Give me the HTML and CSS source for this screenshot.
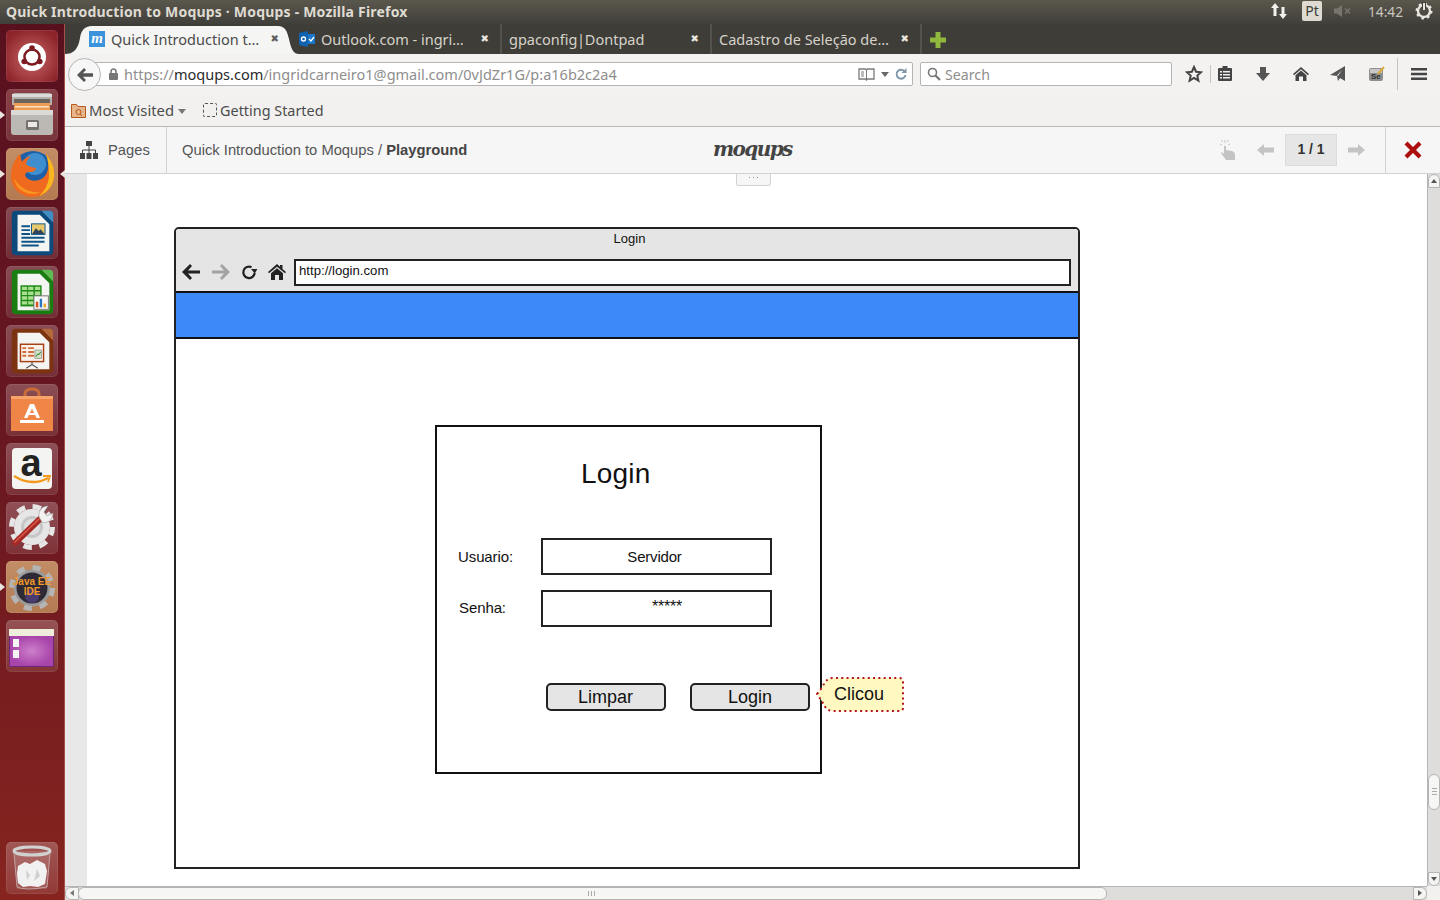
FILE: index.html
```html
<!DOCTYPE html>
<html lang="pt-br">
<head>
  <meta charset="UTF-8">
  <meta name="viewport" content="width=device-width, initial-scale=1.0">
  <title>Quick Introduction to Moqups</title>
  <link rel="stylesheet" href="styles.css">
</head>
<body>

  <!-- barra do sistema -->
  <header class="panel">
    <span class="panel-title">Quick Introduction to Moqups · Moqups - Mozilla Firefox</span>
    <div class="panel-tray">
      <svg class="tray-net" width="18" height="18" viewBox="0 0 18 18"><path fill="#f2f1ec" d="M5 1l4 5H6.500v8h-3V6H1zM13 17l-4-5h2.500V5h3v7H17z"/></svg>
      <span class="tray-lang">Pt</span>
      <svg class="tray-vol" width="20" height="14" viewBox="0 0 20 14"><path fill="#77756e" d="M2 4.500h3L10 1v12L5 9.500H2z"/><path stroke="#77756e" stroke-width="1.600" d="M13 4.500l5 5M18 4.500l-5 5"/></svg>
      <span class="tray-clock">14:42</span>
      <svg class="tray-power" width="18" height="18" viewBox="0 0 18 18"><circle cx="9" cy="9" r="6" fill="none" stroke="#e8e6df" stroke-width="2.400"/><circle cx="9" cy="9" r="7.300" fill="none" stroke="#e8e6df" stroke-width="2.400" stroke-dasharray="2.500 3.230"/><path stroke="#3f3d38" stroke-width="4" d="M9 0v7"/><path stroke="#e8e6df" stroke-width="2" d="M9 1v7"/></svg>
    </div>
  </header>

  <div class="desktop">

    <!-- launcher do unity -->
    <nav class="launcher">
      <div class="tile tile-red">
        <svg viewBox="0 0 52 52"><circle cx="26" cy="27" r="14" fill="#fff"/><circle cx="26" cy="27" r="7.500" fill="none" stroke="#7c1c22" stroke-width="2.600"/><g fill="#7c1c22"><circle cx="26" cy="18" r="2.800"/><circle cx="18.200" cy="31.500" r="2.800"/><circle cx="33.800" cy="31.500" r="2.800"/></g></svg>
      </div>
      <div class="tile tile-dim">
        <i class="pip pip-left"></i>
        <svg viewBox="0 0 52 52"><path fill="#b4b1ac" d="M6 7q0-3 3-3h34q3 0 3 3v9H6z"/><path fill="#dddbd7" d="M6 5h40v3H6z"/><path fill="#6a655f" d="M8 10h36v6H8z"/><path fill="#ee9c54" d="M8 14h36v7H8z"/><path fill="#fbe3c6" d="M9 17h34v1.500H9z"/><path fill="#bcb9b4" d="M5 21h42v22q0 3-3 3H8q-3 0-3-3z"/><path fill="#dcdad6" d="M5 21h42v5H5z"/><rect x="20" y="31" width="13" height="10" rx="1.500" fill="#77736e"/><rect x="22" y="33" width="9" height="5" fill="#ecebe8"/></svg>
      </div>
      <div class="tile tile-active">
        <i class="pip pip-left"></i><i class="pip pip-right"></i>
        <svg viewBox="0 0 52 52"><circle cx="27" cy="23" r="20" fill="#1f5fa5"/><circle cx="29" cy="16" r="11" fill="#3f8fd0"/><path fill="#ef6a1e" d="M14 6C8 12 5 20 5 28c0 13 10 21 22 21 11 0 20-8 21-21 0-8-3-16-8-22 4 8 3 18-2 23-5 5-14 5-18 0-2-3 0-5 4-5s6-2 6-4c-3-1-8-1-10-4 1-4 3-6 5-8-5 1-8 4-9 6z"/><path fill="#f9b61f" d="M40 6c6 7 9 15 8 23-1 9-7 16-15 19 6-5 10-13 10-21 0-8-1-15-3-21z"/><path fill="#f8971f" d="M8 30c1 9 9 16 19 16 3 0 5-1 7-2-11 1-21-4-26-14z"/></svg>
      </div>
      <div class="tile">
        <svg viewBox="-1 -1 54 54"><path fill="#0d4a7c" d="M9 3h27l12 12v30q0 4-4 4H9q-4 0-4-4V7q0-4 4-4z"/><path fill="#3f8fc4" d="M36 3h8q4 0 4 4v8z"/><path fill="#f4f4f2" d="M11 7h23l10 10v28H11z"/><g fill="#0f5587"><path d="M15 18h9v2h-9zM15 22h9v2h-9zM15 26h9v2h-9zM15 30h24v2H15zM15 34h24v2H15zM15 38h18v2H15z"/><rect x="25" y="16" width="15" height="12"/></g><path fill="#e9c76b" d="M26 17h13v10H26z"/><path fill="#30455a" d="M26 27l4-6 3 3 2-2 4 5z"/></svg>
      </div>
      <div class="tile">
        <svg viewBox="-1 -1 54 54"><path fill="#197d12" d="M9 3h27l12 12v30q0 4-4 4H9q-4 0-4-4V7q0-4 4-4z"/><path fill="#5dbb52" d="M36 3h8q4 0 4 4v8z"/><path fill="#f4f4f2" d="M11 7h23l10 10v28H11z"/><path fill="#1f8a17" d="M14 19h22v22H14z"/><g fill="#a9df8e"><path d="M15.500 20.500h5.500v3.500h-5.500zM22 20.500h5.500v3.500H22zM29 20.500h5.500v3.500H29zM15.500 25.500h5.500v3.500h-5.500zM22 25.500h5.500v3.500H22zM29 25.500h5.500v3.500H29zM15.500 30.500h5.500v3.500h-5.500zM22 30.500h5.500v3.500H22zM15.500 35.500h5.500v3.500h-5.500zM22 35.500h5.500v3.500H22z"/></g><rect x="28" y="30" width="15" height="14" fill="#f7f7f5" stroke="#777"/><path fill="#d9531e" d="M30 36h2.500v6H30z"/><path fill="#2a78c2" d="M34 33h2.500v9H34z"/><path fill="#e9a81f" d="M38 38h2.500v4H38z"/></svg>
      </div>
      <div class="tile">
        <svg viewBox="-1 -1 54 54"><path fill="#7c3410" d="M9 3h27l12 12v30q0 4-4 4H9q-4 0-4-4V7q0-4 4-4z"/><path fill="#b5683a" d="M36 3h8q4 0 4 4v8z"/><path fill="#f4f4f2" d="M11 7h23l10 10v28H11z"/><rect x="14" y="19" width="24" height="18" fill="#faf2ea" stroke="#a63f12" stroke-width="1.500"/><path fill="#cf6d38" d="M16 22h4v2h-4zM22 22h6v2h-6zM16 26h4v2h-4zM22 26h6v2h-6zM16 30h4v2h-4zM22 30h6v2h-6z"/><rect x="29" y="25" width="7" height="9" fill="#cfe0c4" stroke="#777" stroke-width=".6"/><path stroke="#2f7d28" fill="none" d="M30 32l2-3 1 1 2-3"/><path stroke="#555" stroke-width="1.200" fill="none" d="M26 37v3M26 40l-6 4M26 40l6 4"/></svg>
      </div>
      <div class="tile">
        <svg viewBox="0 0 52 52"><path fill="none" stroke="#c96c39" stroke-width="3" d="M19 14v-4q0-5 7-5t7 5v4"/><path fill="#ef8648" d="M5 12h42v35H5z"/><path fill="#f7a46b" d="M5 12h42v3H5z"/><path fill="#fff" fill-rule="evenodd" d="M24 20h4l6 14h-3.500l-1.200-3h-6.600l-1.200 3H18zM26 24.500l-2 4.500h4z"/><path fill="#fff" d="M14 36h24v3H14z"/></svg>
      </div>
      <div class="tile">
        <svg viewBox="0 0 52 52"><rect x="6" y="5" width="40" height="41" rx="4" fill="#f4f4f2"/><text class="amazon-a" x="25" y="33" text-anchor="middle">a</text><path d="M8 33q18 11 34 2" fill="none" stroke="#f39a1d" stroke-width="2.400"/><path d="M37 33l7 0-2 6" fill="none" stroke="#f39a1d" stroke-width="1.800"/></svg>
      </div>
      <div class="tile">
        <svg viewBox="0 0 52 52"><circle cx="26" cy="25" r="18" fill="#e6e6e6"/><circle cx="26" cy="25" r="20.500" fill="none" stroke="#e6e6e6" stroke-width="5" stroke-dasharray="8.500 7.600"/><circle cx="26" cy="25" r="11" fill="#c6c6c6"/><circle cx="26" cy="25" r="8" fill="#dedede"/><path d="M9 41L35 16" stroke="#a32a25" stroke-width="6" stroke-linecap="round"/><path d="M9 40L33 17" stroke="#e0574d" stroke-width="1.500" stroke-linecap="round"/><path fill="#f1f1f1" stroke="#999" stroke-width=".6" d="M33 15c-1-6 3-11 9-11l-4 6 3 4 6-3c0 7-6 11-11 9z"/></svg>
      </div>
      <div class="tile tile-active">
        <i class="pip pip-left"></i>
        <svg viewBox="0 0 52 52"><circle cx="26" cy="27" r="17" fill="#2d2a35" stroke="#9a9a9a" stroke-width="3"/><circle cx="26" cy="27" r="20.500" fill="none" stroke="#b5b5b5" stroke-width="5" stroke-dasharray="8 8.100"/><circle cx="26" cy="35" r="7" fill="#4a3b70"/><text class="java-label" x="26" y="24" text-anchor="middle">Java EE</text><text class="java-label" x="26" y="34" text-anchor="middle">IDE</text></svg>
      </div>
      <div class="tile">
        <svg viewBox="0 0 52 52"><defs><radialGradient id="work-glow"><stop offset="0" stop-color="#cd7fca"/><stop offset="1" stop-color="#a845aa"/></radialGradient></defs><rect x="3" y="9" width="45" height="38" rx="2" fill="#6e2478"/><path fill="#efeedd" d="M3 9h45v7H3z"/><path fill="url(#work-glow)" d="M4 16h43v30H4z"/><path fill="#f4f4f2" d="M7 19h6v8H7zM7 30h6v8H7z"/></svg>
      </div>
      <div class="tile tile-trash">
        <svg viewBox="0 0 52 52"><path fill="#fff" opacity=".14" d="M8 9h36l-3 38H11z"/><path fill="#f1f1f1" d="M12 24l7-4 5 2 7-4 8 4 2 7-2 13-7 3-8-1-7 1-5-4-1-9z"/><path fill="#cfcfcf" d="M20 28l4 5-3 5zM31 27l3 7-6 5z"/><ellipse cx="26" cy="9" rx="18" ry="4" fill="none" stroke="#d2d2d0" stroke-width="3"/><path stroke="#c2a3a3" fill="none" d="M8 11l3 34q8 4 30 0l3-34"/></svg>
      </div>
    </nav>

    <div class="firefox">

      <!-- abas -->
      <div class="tabs">
        <div class="tab tab-active">
          <svg class="tab-shape" width="234" height="28" viewBox="0 0 234 28"><path fill="#f5f5f4" d="M0 28c8 0 13-4 15-16 1-7 4-12 12-12h186c7 0 9 5 11 13 2 9 4 15 10 15z"/></svg>
          <svg class="favicon" width="16" height="16" viewBox="0 0 16 16"><rect width="16" height="16" fill="#3a93db"/><text class="favicon-m" x="8" y="12" text-anchor="middle">m</text></svg>
          <span class="tab-label">Quick Introduction t…</span>
          <span class="tab-close">✖</span>
        </div>
        <div class="tab">
          <svg class="favicon" width="16" height="16" viewBox="0 0 16 16"><path fill="#0f62ae" d="M0 2l9-2v16l-9-2z"/><path fill="#1976c8" d="M9 3h7v10H9z"/><circle cx="4.500" cy="8" r="2" fill="none" stroke="#fff" stroke-width="1.400"/><path stroke="#fff" stroke-width="1.300" fill="none" d="M10 8l2 2 3-4"/></svg>
          <span class="tab-label">Outlook.com - ingri…</span>
          <span class="tab-close">✖</span>
        </div>
        <div class="tab">
          <span class="tab-label tab-label-tight">gpaconfig | Dontpad</span>
          <span class="tab-close">✖</span>
        </div>
        <div class="tab">
          <span class="tab-label">Cadastro de Seleção de…</span>
          <span class="tab-close">✖</span>
        </div>
        <svg class="tab-new" width="16" height="16" viewBox="0 0 16 16"><path fill="#8fb83c" d="M5.500 0h5v5.500H16v5h-5.500V16h-5v-5.500H0v-5h5.500z"/></svg>
      </div>

      <!-- barra de navegacao -->
      <div class="navbar">
        <div class="urlbar">
          <svg class="lock" width="11" height="12" viewBox="0 0 11 12"><path fill="none" stroke="#777" stroke-width="1.500" d="M3 6V4q0-3 2.500-3T8 4v2"/><rect x="1" y="5" width="9" height="7" rx="1" fill="#777"/></svg>
          <span class="url"><span class="url-dim">https://</span>moqups.com<span class="url-dim">/ingridcarneiro1@gmail.com/0vJdZr1G/p:a16b2c2a4</span></span>
          <svg class="url-icons" width="50" height="14" viewBox="0 0 50 14"><path fill="none" stroke="#7b7b7b" stroke-width="1.300" d="M1 2h6.500l1 1 1-1H16v10H9.500l-1 1-1-1H1z"/><path stroke="#7b7b7b" d="M8.500 3v9M3 5h3M3 7h3M3 9h3"/><path fill="#666" d="M23 5h8l-4 5z"/><path fill="none" stroke="#7e94a8" stroke-width="1.800" d="M47.500 8a4.500 4.500 0 1 1-1.300-4"/><path fill="#7e94a8" d="M48.500 1v5h-5z"/></svg>
        </div>
        <button class="back-btn">
          <svg width="16" height="14" viewBox="0 0 16 14"><path fill="#555" d="M7 0l2 2-3.200 3.300H16v3.400H5.800L9 12l-2 2-7-7z"/></svg>
        </button>
        <div class="searchbar">
          <svg width="14" height="14" viewBox="0 0 14 14"><circle cx="5.500" cy="5.500" r="4" fill="none" stroke="#777" stroke-width="1.600"/><path stroke="#777" stroke-width="2.200" d="M8.500 8.500l4.500 4.500"/></svg>
          <span>Search</span>
        </div>
        <div class="nav-tools">
          <svg class="tool-star" width="18" height="18" viewBox="0 0 18 18"><path fill="none" stroke="#444" stroke-width="2" d="M9 2l2.100 4.700 5 .5-3.800 3.400 1.100 5L9 13l-4.400 2.600 1.100-5L1.900 7.200l5-.5z"/></svg>
          <i class="tool-sep"></i>
          <svg class="tool-list" width="16" height="16" viewBox="0 0 16 16"><path fill="#444" d="M2 2h3.500V0h5v2H14q1 0 1 1v11q0 1-1 1H2q-1 0-1-1V3q0-1 1-1z"/><path fill="#eee" d="M3 5h2v1.500H3zM6 5h7v1.500H6zM3 8h2v1.500H3zM6 8h7v1.500H6zM3 11h2v1.500H3zM6 11h7v1.500H6z"/></svg>
          <svg class="tool-down" width="16" height="16" viewBox="0 0 16 16"><path fill="#555" d="M5 1h6v6h4l-7 8-7-8h4z"/></svg>
          <svg class="tool-home" width="16" height="16" viewBox="0 0 16 16"><path fill="#444" d="M8 1l8 7-1 1.200L8 3.200 1 9.200 0 8z"/><path fill="#444" d="M8 4.500l5.500 4.800V15H10v-4.500H6V15H2.500V9.300z"/></svg>
          <svg class="tool-send" width="16" height="16" viewBox="0 0 16 16"><path fill="#555" d="M15 0v15l-5-3-2 3-1-5-7-1z"/><path fill="#eee" d="M12 4l-5 5.500 1 .5z"/></svg>
          <svg class="tool-se" width="16" height="16" viewBox="0 0 16 16"><rect y="2" width="14" height="13" rx="2" fill="#8f8f8f"/><path fill="#c7c7c7" d="M1 3h12v4H1z"/><path stroke="#d8a93a" stroke-width="2" d="M9 8l6-7"/><text class="se-label" x="2" y="13">Se</text></svg>
          <i class="tool-sep tool-sep-tall"></i>
          <svg class="tool-menu" width="16" height="14" viewBox="0 0 16 14"><path fill="#444" d="M0 1h16v2.500H0zM0 5.800h16v2.500H0zM0 10.500h16V13H0z"/></svg>
        </div>
      </div>

      <!-- favoritos -->
      <div class="bookmarks">
        <svg width="15" height="15" viewBox="0 0 15 15"><path fill="#e7b58a" stroke="#b35a1c" d="M.5 1.500h5l1.500 2h7.500v11H.5z"/><circle cx="7.500" cy="9" r="2.500" fill="none" stroke="#b35a1c"/><path stroke="#b35a1c" d="M9 11l2 2"/></svg>
        <span class="bm-label">Most Visited</span>
        <i class="bm-caret"></i>
        <i class="bm-page"></i>
        <span class="bm-label">Getting Started</span>
      </div>

      <!-- barra do moqups -->
      <div class="mq-toolbar">
        <div class="mq-pages">
          <svg width="18" height="18" viewBox="0 0 18 18"><path fill="#444" d="M6 0h6v5H6zM0 12h5v6H0zM6.500 12h5v6h-5zM13 12h5v6h-5z"/><path stroke="#444" fill="none" d="M9 5v4M2.500 12V9h13v3M9 9v3"/></svg>
          <span>Pages</span>
        </div>
        <div class="mq-crumb">Quick Introduction to Moqups / <b>Playground</b></div>
        <div class="mq-logo">moqups</div>
        <div class="mq-pager">
          <svg class="mq-hand" width="18" height="20" viewBox="0 0 18 20"><path fill="#c4c4c4" d="M5 6q2-1 2 1v3l6 1q3 1 3 4v5H7L2 13l1-1 2 2z"/><path stroke="#c4c4c4" fill="none" d="M6 0v3M1 4l2 1M11 4L9 5M2 0l2 2M10 0L8 2"/></svg>
          <svg class="mq-arrow" width="17" height="12" viewBox="0 0 17 12"><path fill="#c4c4c4" d="M7 0v3.500h10v5H7V12L0 6z"/></svg>
          <span class="mq-count">1 / 1</span>
          <svg class="mq-arrow" width="17" height="12" viewBox="0 0 17 12"><path fill="#c4c4c4" d="M10 0v3.500H0v5h10V12l7-6z"/></svg>
        </div>
        <div class="mq-close">
          <svg width="18" height="18" viewBox="0 0 18 18"><path stroke="#ad0f0f" stroke-width="4.200" d="M2 2l14 14M16 2L2 16"/></svg>
        </div>
      </div>

      <!-- area do desenho -->
      <div class="viewport">
        <div class="stage">
          <i class="gutter"></i>
          <div class="paper">
            <i class="handle"></i>
            <section class="wf-browser">
              <div class="wf-chrome">
                <div class="wf-title">Login</div>
                <div class="wf-nav">
                  <svg width="18" height="16" viewBox="0 0 18 16"><path fill="#222" d="M8 0l2 2-4 4.500h12v3H6l4 4.500-2 2-8-8z"/></svg>
                  <svg width="18" height="16" viewBox="0 0 18 16"><path fill="#a3a3a3" d="M10 0L8 2l4 4.500H0v3h12L8 14l2 2 8-8z"/></svg>
                  <svg width="16" height="16" viewBox="0 0 16 16"><path fill="none" stroke="#222" stroke-width="2.200" d="M10.500 3.200A5.700 5.700 0 1 0 13.700 9"/><path fill="#222" d="M10 5h6.500L13.800 9.500z"/></svg>
                  <svg width="18" height="16" viewBox="0 0 18 16"><path fill="#222" d="M9 0l3 2.700V1h2.500v4l3.500 3-1 1.200L9 2.800 1 9.200 0 8z"/><path fill="#222" d="M9 4.300l6 5V16h-4v-5H7v5H3V9.300z"/></svg>
                  <div class="wf-url">http://login.com</div>
                </div>
              </div>
              <div class="wf-band"></div>
              <div class="wf-body">
                <div class="login-box"></div>
                <h2 class="login-title">Login</h2>
                <span class="wf-label wf-label-user">Usuario:</span>
                <div class="wf-input wf-input-user">Servidor</div>
                <span class="wf-label wf-label-pass">Senha:</span>
                <div class="wf-input wf-input-pass">*****</div>
                <div class="wf-btn wf-btn-clear">Limpar</div>
                <div class="wf-btn wf-btn-login">Login</div>
                <div class="wf-note">
                  <svg width="88" height="36" viewBox="0 0 88 36"><path fill="#fff8c0" stroke="#b5121b" stroke-width="2" stroke-dasharray="2 3.300" d="M1 18C4 15 6 11 8 8q3-6 9-6h66q4 0 4 4v26q0 3-4 3H17q-6 0-9-6-2-4-7-11z"/></svg>
                  <span>Clicou</span>
                </div>
              </div>
            </section>
          </div>
        </div>

        <div class="scroll-v">
          <i class="sc-btn sc-up"></i>
          <i class="sc-thumb-v"></i>
          <i class="sc-btn sc-down"></i>
        </div>
        <div class="scroll-h">
          <i class="sc-btn-h sc-left"></i>
          <i class="sc-thumb-h"></i>
          <i class="sc-btn-h sc-right"></i>
        </div>
      </div>

    </div>
  </div>

</body>
</html>
```

FILE: styles.css
```css
* {
  box-sizing: border-box;
}

html, body {
  margin: 0;
  height: 900px;
  overflow: hidden;
}

body {
  display: flex;
  flex-direction: column;
  font-family: "Noto Sans", "Open Sans", sans-serif;
  background: #f2f1f0;
}

i {
  display: block;
}

/* barra do sistema */
.panel {
  height: 24px;
  flex: none;
  display: flex;
  align-items: center;
  justify-content: space-between;
  padding: 0 7px 2px 6px;
  background: linear-gradient(to bottom, #5a574d, #403f3a);
}

.panel-title {
  color: #dfdbd2;
  font-size: 14px;
  font-weight: 700;
  letter-spacing: 0.2px;
  white-space: nowrap;
}

.panel-tray {
  display: flex;
  align-items: center;
}

.tray-net {
  margin-right: 14px;
}

.tray-lang {
  width: 20px;
  height: 20px;
  margin-right: 10px;
  border-radius: 2px;
  background: #dfdbd2;
  color: #3c3b37;
  font-size: 14px;
  line-height: 20px;
  text-align: center;
}

.tray-vol {
  margin-right: 16px;
}

.tray-clock {
  margin-right: 12px;
  color: #c9c6bd;
  font-size: 13.700px;
}

/* launcher */
.desktop {
  flex: 1;
  display: flex;
  min-height: 0;
}

.launcher {
  width: 65px;
  flex: none;
  display: flex;
  flex-direction: column;
  gap: 7px;
  padding: 6px;
  border-right: 1px solid #a5504a;
  background: linear-gradient(to bottom, #58101f, #6a1821 50%, #86241f);
}

.tile {
  position: relative;
  width: 52px;
  height: 52px;
  flex: none;
  border-radius: 5px;
  background: linear-gradient(to bottom, rgba(255,255,255,0.24), rgba(255,255,255,0.1));
  box-shadow: inset 0 0 0 1px rgba(255,255,255,0.08);
}

.tile svg {
  display: block;
  width: 52px;
  height: 52px;
  overflow: visible;
}

.tile-red {
  background: radial-gradient(circle at 50% 55%, #c9686a, #8c2429 80%);
}

.tile-dim {
  background: linear-gradient(to bottom, #8a4148, #79353c);
}

.tile-active {
  background: linear-gradient(to bottom, #c38d66, #b47a52);
}

.tile-trash {
  margin-top: auto;
}

.pip {
  position: absolute;
  top: 22px;
  width: 0;
  height: 0;
  border-top: 4px solid transparent;
  border-bottom: 4px solid transparent;
}

.pip-left {
  left: -6px;
  border-left: 5px solid #e8e4df;
}

.pip-right {
  right: -7px;
  border-right: 5px solid #e8e4df;
}

.amazon-a {
  font-family: "Liberation Sans", sans-serif;
  font-size: 38px;
  font-weight: 700;
  fill: #222;
}

.java-label {
  font-family: "Liberation Sans", sans-serif;
  font-size: 10px;
  font-weight: 700;
  fill: #f2982a;
}

/* janela do firefox */
.firefox {
  flex: 1;
  display: flex;
  flex-direction: column;
  min-width: 0;
}

.tabs {
  height: 30px;
  flex: none;
  display: flex;
  align-items: center;
  padding-left: 15px;
  background: #3e3d38;
}

.tab {
  position: relative;
  width: 210px;
  height: 30px;
  display: flex;
  align-items: center;
  padding: 0 7px;
  border-right: 2px solid #55534d;
  color: #d6d3ca;
  font-size: 14.500px;
  white-space: nowrap;
}

.tab-active {
  width: 212px;
  padding-left: 9px;
  border-right: 0;
  color: #4a4a4a;
}

.tab-shape {
  position: absolute;
  left: -15px;
  bottom: 0;
}

.favicon {
  position: relative;
  flex: none;
  margin-right: 6px;
}

.favicon-m {
  font-family: "Liberation Serif", serif;
  font-size: 15px;
  font-style: italic;
  font-weight: 700;
  fill: #fff;
}

.tab-label {
  position: relative;
}

.tab-label-tight {
  word-spacing: -4px;
}

.tab-close {
  position: absolute;
  right: 11px;
  top: 8px;
  font-family: "DejaVu Sans", sans-serif;
  font-size: 10px;
  line-height: 14px;
  color: #e8e6df;
}

.tab-active .tab-close {
  right: 13px;
  color: #5e5e5e;
}

.tab-new {
  margin: 2px 0 0 8px;
}

/* navegacao */
.navbar {
  position: relative;
  height: 40px;
  flex: none;
  display: flex;
  align-items: center;
  padding: 0 13px 0 20px;
  background: #f3f2f1;
}

.urlbar {
  width: 828px;
  height: 24px;
  flex: none;
  display: flex;
  align-items: center;
  padding: 0 4px 0 22px;
  border: 1px solid #b4b4b4;
  border-radius: 2px;
  background: #fff;
}

.lock {
  margin-right: 5px;
}

.url {
  flex: 1;
  color: #2a2a2a;
  font-size: 14.500px;
  white-space: nowrap;
}

.url-dim {
  color: #8e8e8e;
}

.back-btn {
  position: absolute;
  left: 3px;
  top: 4px;
  width: 33px;
  height: 33px;
  display: flex;
  align-items: center;
  justify-content: center;
  padding: 0;
  border: 1px solid #b4b4b4;
  border-radius: 50%;
  background: #f7f7f7;
}

.searchbar {
  width: 252px;
  height: 24px;
  flex: none;
  display: flex;
  align-items: center;
  gap: 4px;
  margin-left: 7px;
  padding-left: 6px;
  border: 1px solid #b4b4b4;
  border-radius: 2px;
  background: #fff;
  color: #8e8e8e;
  font-size: 14.200px;
}

.nav-tools {
  flex: 1;
  display: flex;
  align-items: center;
  padding-left: 13px;
}

.tool-sep {
  width: 1px;
  height: 18px;
  margin: 0 6px 0 7px;
  background: #c4c4c4;
}

.tool-sep-tall {
  height: 32px;
  margin: 0 13px 0 12px;
}

.tool-list { margin-right: 22px; }
.tool-down { margin-right: 22px; }
.tool-home { margin-right: 21px; }
.tool-send { margin-right: 23px; }

.se-label {
  font-family: "Liberation Sans", sans-serif;
  font-size: 8px;
  font-weight: 700;
  fill: #333;
}

/* favoritos */
.bookmarks {
  height: 33px;
  flex: none;
  display: flex;
  align-items: center;
  padding-left: 6px;
  border-bottom: 1px solid #b7b7b7;
  background: #f2f1f0;
}

.bm-label {
  margin-left: 3px;
  color: #4c4c4c;
  font-size: 14.800px;
}

.bm-page + .bm-label {
  font-size: 14.400px;
}

.bm-caret {
  width: 0;
  height: 0;
  margin: 2px 17px 0 4px;
  border-top: 5px solid #777;
  border-left: 4px solid transparent;
  border-right: 4px solid transparent;
}

.bm-page {
  width: 14px;
  height: 14px;
  border: 1px dashed #555;
  border-radius: 2px;
}

/* barra do moqups */
.mq-toolbar {
  position: relative;
  height: 47px;
  flex: none;
  display: flex;
  align-items: center;
  border-bottom: 1px solid #d2d2d2;
  background: #f6f6f6;
  font-family: "Liberation Sans", sans-serif;
  font-size: 14.750px;
  color: #555;
}

.mq-pages {
  width: 102px;
  height: 100%;
  display: flex;
  align-items: center;
  gap: 10px;
  padding-left: 15px;
  border-right: 1px solid #d2d2d2;
}

.mq-crumb {
  padding-left: 15px;
}

.mq-crumb b {
  color: #444;
}

.mq-logo {
  position: absolute;
  left: 648px;
  top: 10px;
  font-family: "DejaVu Serif", serif;
  font-size: 20px;
  font-style: italic;
  font-weight: 700;
  letter-spacing: -1.600px;
  color: #444;
}

.mq-pager {
  margin-left: auto;
  display: flex;
  align-items: center;
  gap: 11px;
  padding-right: 20px;
  height: 100%;
}

.mq-hand {
  margin-right: 9px;
}

.mq-count {
  width: 52px;
  height: 32px;
  border: 1px solid #dcdcdc;
  background: #e6e6e6;
  color: #333;
  font-size: 14px;
  font-weight: 700;
  line-height: 28px;
  text-align: center;
}

.mq-close {
  width: 55px;
  height: 100%;
  display: flex;
  align-items: center;
  justify-content: center;
  border-left: 1px solid #d2d2d2;
}

/* area do desenho */
.viewport {
  flex: 1;
  display: grid;
  grid-template-columns: 1fr 13px;
  grid-template-rows: 1fr 14px;
  min-height: 0;
}

.stage {
  display: flex;
  min-height: 0;
  overflow: hidden;
}

.gutter {
  width: 22px;
  flex: none;
  background: #e8e8e8;
}

.paper {
  position: relative;
  flex: 1;
  padding: 53px 0 0 87px;
  background: #fff;
}

.handle {
  position: absolute;
  left: 649px;
  top: 0;
  width: 35px;
  height: 12px;
  border: 1px solid #d2d2d2;
  border-top: 0;
  border-radius: 0 0 3px 3px;
  background: #f6f6f6;
}

.handle::after {
  content: "";
  position: absolute;
  left: 12px;
  top: 3px;
  width: 10px;
  height: 1px;
  background: repeating-linear-gradient(to right, #999 0 1px, transparent 1px 4px);
}

.wf-browser {
  width: 906px;
  height: 642px;
  display: flex;
  flex-direction: column;
  border: 2px solid #222;
  border-radius: 5px 5px 0 0;
  font-family: "Liberation Sans", sans-serif;
  color: #111;
}

.wf-chrome {
  height: 62px;
  flex: none;
  border-radius: 3px 3px 0 0;
  background: #e5e5e5;
}

.wf-title {
  height: 30px;
  padding-top: 2px;
  padding-left: 5px;
  font-size: 13px;
  text-align: center;
}

.wf-nav {
  display: flex;
  align-items: center;
  gap: 12px;
  padding-left: 6px;
}

.wf-nav svg {
  margin-bottom: 2px;
}

.wf-nav svg:nth-child(3) {
  margin-left: -1px;
  margin-right: -1px;
}

.wf-url {
  width: 777px;
  height: 27px;
  margin-left: -4px;
  padding: 2px 3px;
  border: 2px solid #222;
  background: #fff;
  font-size: 13.200px;
}

.wf-band {
  height: 48px;
  flex: none;
  border-top: 2px solid #111;
  border-bottom: 2px solid #111;
  background: #3d89f9;
}

/* itens do wireframe ficam livres no canvas */
.wf-body {
  position: relative;
  flex: 1;
}

.login-box {
  position: absolute;
  left: 259px;
  top: 86px;
  width: 387px;
  height: 349px;
  border: 2px solid #111;
}

.login-title {
  position: absolute;
  left: 405px;
  top: 117px;
  margin: 0;
  font-size: 28px;
  font-weight: 400;
  line-height: 36px;
  letter-spacing: 0.200px;
}

.wf-label {
  position: absolute;
  font-size: 15px;
  line-height: 18px;
  letter-spacing: -0.100px;
}

.wf-label-user {
  left: 282px;
  top: 209px;
}

.wf-label-pass {
  left: 283px;
  top: 260px;
}

.wf-input {
  position: absolute;
  left: 365px;
  width: 231px;
  height: 37px;
  border: 2px solid #222;
  background: #fff;
  font-size: 15px;
  letter-spacing: -0.200px;
  text-align: center;
}

.wf-input-user {
  top: 199px;
  padding-right: 4px;
  line-height: 33px;
}

.wf-input-pass {
  top: 251px;
  padding-left: 21px;
  font-size: 16px;
  line-height: 29px;
}

.wf-btn {
  position: absolute;
  top: 344px;
  width: 120px;
  height: 28px;
  border: 2px solid #222;
  border-radius: 5px;
  background: #e5e5e5;
  font-size: 18px;
  line-height: 25px;
  text-align: center;
}

.wf-btn-clear {
  left: 370px;
  padding-right: 1px;
}

.wf-btn-login {
  left: 514px;
}

.wf-note {
  position: absolute;
  left: 640px;
  top: 337px;
  width: 88px;
  height: 36px;
  font-size: 18px;
}

.wf-note svg {
  display: block;
}

.wf-note span {
  position: absolute;
  left: 18px;
  top: 8px;
}

/* barras de rolagem */
.scroll-v {
  position: relative;
  border-left: 1px solid #b5b5b5;
  background: #dedddb;
}

.sc-btn {
  position: absolute;
  left: 0;
  width: 12px;
  height: 14px;
  border: 1px solid #b5b5b5;
  background: #f4f4f3;
}

.sc-up {
  top: 0;
  border-radius: 6px 6px 0 0;
}

.sc-up::after,
.sc-down::after {
  content: "";
  position: absolute;
  left: 2px;
  top: 4px;
  border-left: 3px solid transparent;
  border-right: 3px solid transparent;
}

.sc-up::after {
  border-bottom: 4px solid #555;
}

.sc-down {
  bottom: 0;
  border-radius: 0 0 6px 6px;
}

.sc-down::after {
  border-top: 4px solid #555;
}

.sc-thumb-v {
  position: absolute;
  left: 0;
  top: 600px;
  width: 12px;
  height: 36px;
  border: 1px solid #b5b5b5;
  border-radius: 6px;
  background: #f6f6f5;
}

.sc-thumb-v::after {
  content: "";
  position: absolute;
  left: 3px;
  top: 13px;
  width: 5px;
  height: 8px;
  background: repeating-linear-gradient(to bottom, #aaa 0 1px, transparent 1px 3px);
}

.scroll-h {
  position: relative;
  border-top: 1px solid #b5b5b5;
  background: #dedddb;
}

.sc-btn-h {
  position: absolute;
  top: 0;
  width: 14px;
  height: 13px;
  border: 1px solid #b5b5b5;
  background: #f4f4f3;
}

.sc-left {
  left: 0;
  border-radius: 6px 0 0 6px;
}

.sc-right {
  right: 0;
  border-radius: 0 6px 6px 0;
}

.sc-left::after,
.sc-right::after {
  content: "";
  position: absolute;
  top: 2px;
  left: 4px;
  border-top: 3px solid transparent;
  border-bottom: 3px solid transparent;
}

.sc-left::after {
  border-right: 4px solid #777;
}

.sc-right::after {
  border-left: 4px solid #555;
}

.sc-thumb-h {
  position: absolute;
  left: 13px;
  top: 0;
  width: 1029px;
  height: 13px;
  border: 1px solid #b5b5b5;
  border-radius: 6px;
  background: #f6f6f5;
}

.sc-thumb-h::after {
  content: "";
  position: absolute;
  left: 509px;
  top: 3px;
  width: 8px;
  height: 5px;
  background: repeating-linear-gradient(to right, #aaa 0 1px, transparent 1px 3px);
}
```
